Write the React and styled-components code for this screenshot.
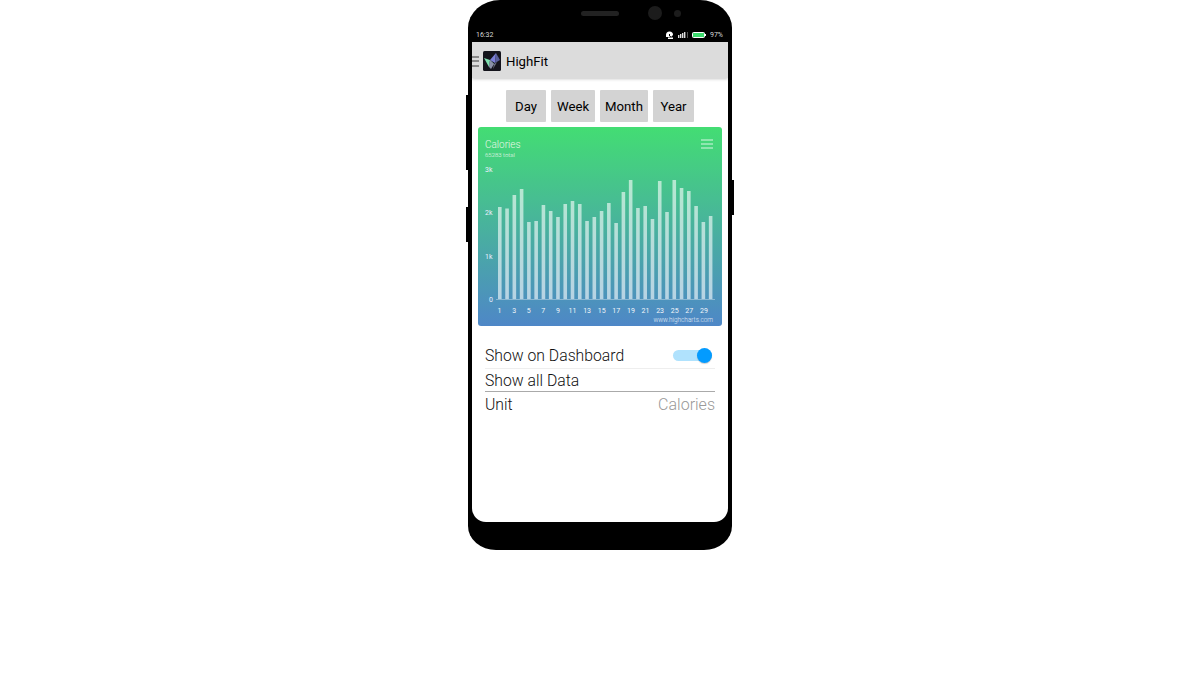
import { useState } from "react";
import styled, { createGlobalStyle } from "styled-components";

const GlobalStyle = createGlobalStyle`
  html, body {
    margin: 0;
    background: #fff;
    font-family: Roboto, "Liberation Sans", sans-serif;
  }
`;

const Page = styled.div`
  width: 1200px;
  height: 700px;
  display: flex;
  justify-content: center;
  align-items: flex-start;
`;

const Phone = styled.div`
  position: relative;
  width: 264px;
  height: 550px;
  box-sizing: border-box;
  padding: 0 4px 28px;
  background: #000;
  border-radius: 32px 32px 28px 28px / 28px 28px 24px 24px;
  display: flex;
  flex-direction: column;
`;

const SideKey = styled.div`
  position: absolute;
  width: 2px;
  background: #000;
  top: ${(p) => p.$top}px;
  height: ${(p) => p.$height}px;
  ${(p) => (p.$right ? "right: -2px;" : "left: -2px;")}
`;

const Bezel = styled.div`
  height: 26px;
  flex: none;
  display: flex;
  align-items: center;
  padding: 0 0 0 109px;
`;

const Speaker = styled.div`
  width: 38px;
  height: 5px;
  border-radius: 3px;
  background: #222;
  margin-right: 29px;
`;

const Camera = styled.div`
  width: 14px;
  height: 14px;
  border-radius: 50%;
  background: #1c1c1c;
  margin-right: 12px;
`;

const CameraDot = styled.div`
  width: 7px;
  height: 7px;
  border-radius: 50%;
  background: #1c1c1c;
`;

const StatusBar = styled.div`
  height: 16px;
  box-sizing: border-box;
  padding: 1px 5px 0 4px;
  flex: none;
  display: flex;
  align-items: center;
  justify-content: space-between;
  color: #d8d8d8;
  font-size: 7px;
`;

const StatusIcons = styled.div`
  display: flex;
  align-items: center;
  gap: 4px;
`;

const Screen = styled.div`
  flex: 1;
  background: #fff;
  border-radius: 0 0 14px 14px;
  overflow: hidden;
  display: flex;
  flex-direction: column;
`;

const AppBar = styled.div`
  height: 36px;
  box-sizing: border-box;
  padding-top: 2px;
  flex: none;
  display: flex;
  align-items: center;
  background: #dcdcdc;
  box-shadow: 0 1px 3px rgba(0, 0, 0, 0.22);
`;

const Burger = styled.div`
  width: 7px;
  margin-right: 4px;
  display: flex;
  flex-direction: column;
  gap: 2.5px;
`;

const BurgerLine = styled.span`
  display: block;
  height: 2px;
  background: #8a8a8a;
`;

const AppTitle = styled.div`
  margin-left: 5px;
  font-size: 13.2px;
  color: #000;
`;

const RangeTabs = styled.div`
  display: flex;
  justify-content: center;
  gap: 5px;
  padding: 12px 0 5px;
`;

const RangeTab = styled.button`
  height: 32px;
  width: ${(p) => p.$width}px;
  padding: 0;
  border: none;
  border-radius: 1px;
  background: #d3d3d3;
  color: #000;
  font-family: inherit;
  font-size: 13.2px;
`;

const ChartCard = styled.div`
  margin: 0 6px;
  height: 199px;
  border-radius: 3px;
  overflow: hidden;
  background: linear-gradient(#43dd73, #4e87c7);
`;

const ChartSvg = styled.svg`
  display: block;
  font-family: Roboto, "Liberation Sans", sans-serif;
`;

const Settings = styled.div`
  padding: 17px 13px 0;
  color: #111;
  font-size: 15.75px;
  font-weight: 300;
`;

const SettingRow = styled.div`
  box-sizing: border-box;
  display: flex;
  align-items: center;
  justify-content: space-between;
  height: ${(p) => p.$height}px;
  border-bottom: ${(p) => (p.$line ? `1px solid ${p.$line}` : "none")};
`;

const Value = styled.span`
  color: #999;
  font-size: 16px;
`;

const Toggle = styled.button`
  position: relative;
  width: 39px;
  height: 11px;
  margin-right: 3px;
  padding: 0;
  border: none;
  border-radius: 6px;
  background: #b0e2fd;
`;

const Knob = styled.span`
  position: absolute;
  top: -2px;
  right: 0;
  width: 15px;
  height: 15px;
  border-radius: 50%;
  background: #039bff;
  box-shadow: 0 1px 1px rgba(0, 0, 0, 0.2);
  transform: translateX(${(p) => (p.$on ? 0 : -24)}px);
`;

const barTops = [
  207, 208.5, 195, 189, 222, 221, 205, 211, 217, 204, 201, 204, 221, 217, 211,
  203, 223, 192, 180, 208, 206, 219, 181, 212, 180, 188, 191, 206, 222, 216,
];

const xLabels = [1, 3, 5, 7, 9, 11, 13, 15, 17, 19, 21, 23, 25, 27, 29];

const yLabels = [
  ["3k", 45],
  ["2k", 88],
  ["1k", 132],
  ["0", 175],
];

const AppIcon = () => (
  <svg width="18" height="20" viewBox="0 0 18 20">
    <rect width="18" height="20" rx="1.5" fill="#14141c" />
    <polygon points="1,7 7,9 6,16" fill="#7fe0b0" />
    <polygon points="6,16 7,9 11,13" fill="#5fa890" />
    <polygon points="7,9 13,2 12,12" fill="#7b7fd8" />
    <polygon points="13,2 17,9 12,12" fill="#5a5f9a" />
    <polygon points="7,9 11,13 8,18 6,16" fill="#8a90a8" />
    <polygon points="11,13 14,11 10,18" fill="#6c6f80" />
  </svg>
);

const StatusGlyphs = () => (
  <StatusIcons>
    <svg width="9" height="8" viewBox="0 0 9 8">
      <path d="M1 4a3.5 3.5 0 0 1 7 0l-2 2H1z" fill="#fff" />
      <path d="M4.5 3v2L6 6" stroke="#000" fill="none" />
      <path d="M3 8h5V6.5H3z" fill="#fff" />
    </svg>
    <svg width="10" height="6" viewBox="0 0 10 6">
      <rect x="0" y="3" width="1.4" height="3" fill="#ddd" />
      <rect x="2" y="2" width="1.4" height="4" fill="#ddd" />
      <rect x="4" y="1" width="1.4" height="5" fill="#ddd" />
      <rect x="6" y="0" width="1.4" height="6" fill="#ddd" />
      <rect x="9" y="0" width="1" height="6" fill="#555" />
    </svg>
    <svg width="14" height="6" viewBox="0 0 14 6">
      <rect x="0.5" y="0.5" width="12" height="5" rx="1" fill="#3ddc6e" stroke="#fff" />
      <rect x="13" y="2" width="1" height="2" fill="#fff" />
    </svg>
    <span>97%</span>
  </StatusIcons>
);

const Chart = () => (
  <ChartSvg width="244" height="199" viewBox="0 0 244 199">
    <text x="7" y="21" fontSize="10" fontWeight="300" fill="#e6f7e6">Calories</text>
    <text x="7" y="30" fontSize="6" fontWeight="300" fill="#eef8f0">65283 total</text>
    <g fill="#fff" fillOpacity="0.4">
      <rect x="223" y="12" width="12" height="2" />
      <rect x="223" y="16" width="12" height="2" />
      <rect x="223" y="20" width="12" height="2" />
    </g>
    {yLabels.map(([label, y]) => (
      <text key={label} x={label === "0" ? 11 : 7} y={y} fontSize="7" fill="#eef">
        {label}
      </text>
    ))}
    {barTops.map((top, i) => (
      <rect
        key={i}
        x={20 + i * 7.27}
        y={top - 127}
        width="3.6"
        height={299 - top}
        fill="#fff"
        fillOpacity="0.6"
      />
    ))}
    <rect x="18" y="172" width="219" height="1" fill="#fff" fillOpacity="0.35" />
    {xLabels.map((n, i) => (
      <text key={n} x={21.5 + i * 14.6} y="186" fontSize="7" fill="#f2f6fa" textAnchor="middle">
        {n}
      </text>
    ))}
    <text x="235" y="195" fontSize="6.4" fontWeight="300" fill="#e4edf6" textAnchor="end">www.highcharts.com</text>
  </ChartSvg>
);

const App = () => {
  const [range, setRange] = useState("Day");
  const [onDashboard, setOnDashboard] = useState(true);

  const tabs = [
    { label: "Day", width: 40 },
    { label: "Week", width: 44 },
    { label: "Month", width: 48 },
    { label: "Year", width: 41 },
  ];

  return (
    <Page>
      <GlobalStyle />
      <Phone>
        <SideKey $top={95} $height={75} />
        <SideKey $top={207} $height={35} />
        <SideKey $right $top={180} $height={35} />
        <Bezel>
          <Speaker />
          <Camera />
          <CameraDot />
        </Bezel>
        <StatusBar>
          <span>16:32</span>
          <StatusGlyphs />
        </StatusBar>
        <Screen>
          <AppBar>
            <Burger>
              <BurgerLine />
              <BurgerLine />
              <BurgerLine />
            </Burger>
            <AppIcon />
            <AppTitle>HighFit</AppTitle>
          </AppBar>
          <RangeTabs>
            {tabs.map((t) => (
              <RangeTab key={t.label} $width={t.width} onClick={() => setRange(t.label)}>
                {t.label}
              </RangeTab>
            ))}
          </RangeTabs>
          <ChartCard data-range={range}>
            <Chart />
          </ChartCard>
          <Settings>
            <SettingRow $height={26} $line="#eee">
              Show on Dashboard
              <Toggle onClick={() => setOnDashboard(!onDashboard)}>
                <Knob $on={onDashboard} />
              </Toggle>
            </SettingRow>
            <SettingRow $height={23} $line="#aaa">
              Show all Data
            </SettingRow>
            <SettingRow $height={25}>
              Unit
              <Value>Calories</Value>
            </SettingRow>
          </Settings>
        </Screen>
      </Phone>
    </Page>
  );
};

export default App;
